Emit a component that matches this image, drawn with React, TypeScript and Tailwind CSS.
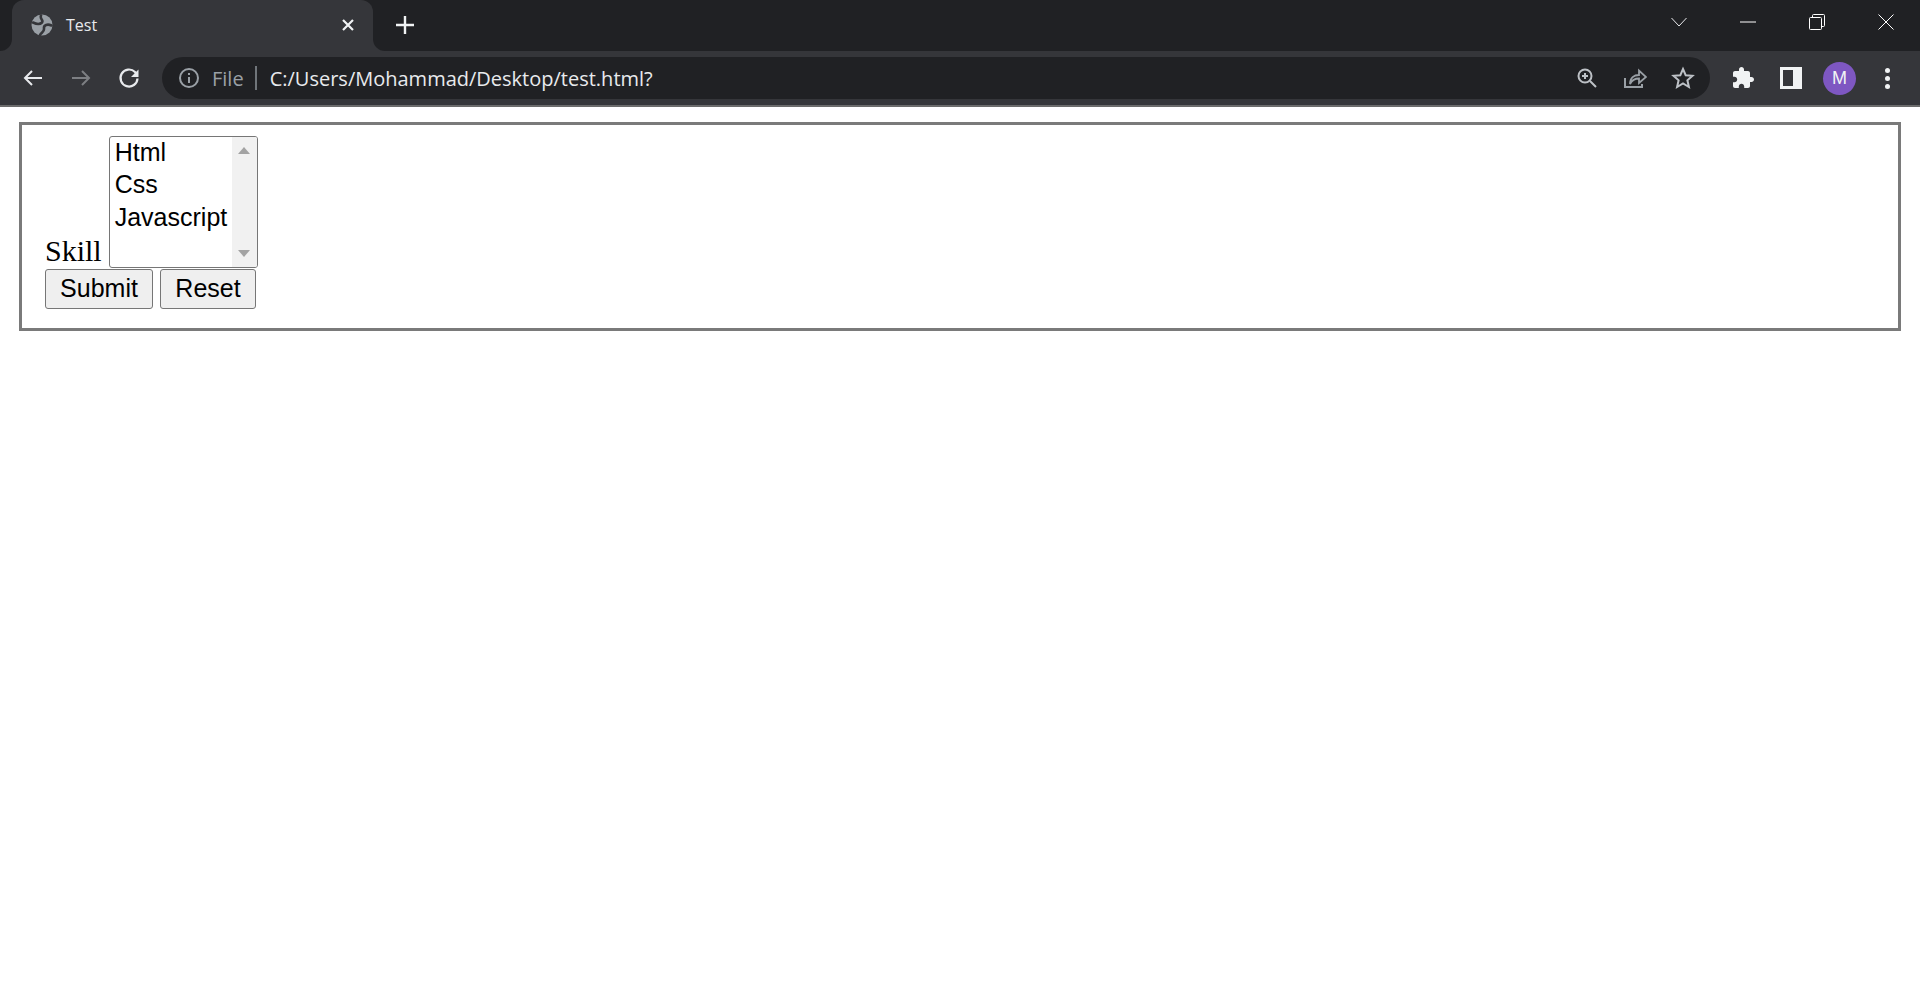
import React from "react";

const TabCorner = ({ side }: { side: "left" | "right" }) => (
  <span
    className={
      side === "left"
        ? "absolute bottom-0 -left-3 h-3 w-3 bg-[#35363a]"
        : "absolute bottom-0 -right-3 h-3 w-3 bg-[#35363a]"
    }
  >
    <span
      className={
        side === "left"
          ? "block h-full w-full rounded-br-xl bg-[#202124]"
          : "block h-full w-full rounded-bl-xl bg-[#202124]"
      }
    />
  </span>
);

const Globe = () => (
  <svg width="22" height="22" viewBox="0 0 22 22" className="shrink-0">
    <circle cx="11" cy="11" r="10.500" fill="#9aa0a6" />
    <g stroke="#35363a" strokeWidth="2.600" fill="none" strokeLinecap="round">
      <path d="M10 1.500C8.500 5 13 6 11 8.500 9 10.500 5 10 2 8.500" />
      <path d="M20.500 11.500C16.500 9.500 12.500 11 13 14.500c.5 3.500-3 4-4 6.500" />
    </g>
  </svg>
);

const Ico = ({ children, w = 24 }: { children: React.ReactNode; w?: number }) => (
  <svg width={w} height={w} viewBox="0 0 24 24" fill="none" className="shrink-0">
    {children}
  </svg>
);

export default function App() {
  return (
    <div className="min-h-screen bg-white font-['Liberation_Sans',sans-serif]">
      <div className="flex h-[51px] items-stretch bg-[#202124]">
        <div className="relative ml-3 flex w-[361px] items-center rounded-t-xl bg-[#35363a] pb-px pl-[19px] pr-[18px]">
          <TabCorner side="left" />
          <Globe />
          <span className="ml-[13px] flex-1 font-['Open_Sans',sans-serif] text-[16px] text-[#e8eaed]">Test</span>
          <svg width="14" height="14" viewBox="0 0 14 14">
            <path d="M2 2l10 10M12 2 2 12" stroke="#f1f3f4" strokeWidth="2.200" />
          </svg>
          <TabCorner side="right" />
        </div>
        <div className="ml-[22px] flex items-center pb-px">
          <svg width="20" height="20" viewBox="0 0 20 20">
            <path d="M10 1v18M1 10h18" stroke="#f1f3f4" strokeWidth="2.400" />
          </svg>
        </div>
        <div className="ml-auto flex items-center pb-2 text-white">
          <svg width="16" height="10" viewBox="0 0 16 10">
            <path d="M.5 1 8 9l7.500-8" stroke="#e8eaed" fill="none" />
          </svg>
          <div className="ml-[53px]">
            <svg width="16" height="2" viewBox="0 0 16 2">
              <path d="M0 1h16" stroke="#fff" />
            </svg>
          </div>
          <div className="ml-[53px]">
            <svg width="16" height="16" viewBox="0 0 16 16" fill="none" stroke="#fff">
              <rect x=".5" y="3.500" width="12" height="12" rx="1" />
              <path d="M3.500 3V1.500a1 1 0 0 1 1-1h10a1 1 0 0 1 1 1v10a1 1 0 0 1-1 1H13" />
            </svg>
          </div>
          <div className="ml-[53px] mr-[26px]">
            <svg width="16" height="16" viewBox="0 0 16 16">
              <path d="M.5.5l15 15M15.500.5l-15 15" stroke="#fff" />
            </svg>
          </div>
        </div>
      </div>

      <div className="flex h-[54px] items-start bg-[#35363a] pt-[6px]">
        <div className="flex h-[42px] w-[162px] shrink-0 items-center pl-[21px]">
          <Ico>
            <path d="M21 12H4M11 5l-7 7 7 7" stroke="#e8eaed" strokeWidth="2" />
          </Ico>
          <div className="ml-6">
            <Ico>
              <path d="M3 12h17M13 5l7 7-7 7" stroke="#7d7f83" strokeWidth="2" />
            </Ico>
          </div>
          <div className="ml-6">
            <Ico>
              <path d="M20.500 12.500A8.500 8.500 0 1 1 18 6l2 2.500" stroke="#e8eaed" strokeWidth="2.200" />
              <path d="M21.500 3.500v7.500H14Z" fill="#e8eaed" />
            </Ico>
          </div>
        </div>
        <div className="flex h-[42px] w-[1548px] shrink-0 items-center rounded-full bg-[#202124] pl-[16px] pr-[15px]">
          <svg width="22" height="22" viewBox="0 0 22 22" fill="none" className="shrink-0">
            <circle cx="11" cy="11" r="9" stroke="#9aa0a6" strokeWidth="2" />
            <path d="M11 10v6M11 6v2" stroke="#9aa0a6" strokeWidth="2" />
          </svg>
          <span className="ml-[12px] pt-px font-['Open_Sans',sans-serif] text-[20px] text-[#9aa0a6]">File</span>
          <span className="ml-[11px] h-6 w-[2px] bg-[#70757a]" />
          <span className="ml-[13px] flex-1 pt-px font-['Open_Sans',sans-serif] text-[20px] text-[#e8eaed]">
            C:/Users/Mohammad/Desktop/test.html?
          </span>
          <Ico>
            <circle cx="10" cy="10" r="6.500" stroke="#bdc1c6" strokeWidth="2" />
            <path d="M15 15l6 6M10 7v6M7 10h6" stroke="#bdc1c6" strokeWidth="2" />
          </Ico>
          <div className="ml-6">
            <Ico>
              <path d="M2 12v9h17v-3" stroke="#9aa0a6" strokeWidth="2" />
              <path
                d="M7 18c0-6 4-9 9-9V4.500l7 6.500-7 6v-4.500c-4 0-7 1.500-9 5.500Z"
                stroke="#9aa0a6"
                strokeWidth="1.800"
              />
            </Ico>
          </div>
          <div className="ml-6">
            <Ico>
              <path
                d="m12 3 2.700 6.200 6.800.6-5.100 4.500 1.500 6.700L12 17.400 6.100 21l1.500-6.700L2.500 9.800l6.800-.6Z"
                stroke="#bdc1c6"
                strokeWidth="2"
              />
            </Ico>
          </div>
        </div>
        <div className="flex h-[42px] flex-1 items-center pl-[21px]">
          <Ico>
            <path
              d="M20.500 11H19V7c0-1.100-.9-2-2-2h-4V3.500C13 2.120 11.880 1 10.500 1S8 2.120 8 3.500V5H4c-1.100 0-1.990.9-1.990 2v3.800H3.500c1.490 0 2.700 1.210 2.700 2.700s-1.210 2.700-2.700 2.700H2V20c0 1.100.9 2 2 2h3.800v-1.500c0-1.490 1.210-2.700 2.700-2.700 1.490 0 2.700 1.210 2.700 2.700V22H17c1.100 0 2-.9 2-2v-4h1.500c1.380 0 2.500-1.120 2.500-2.500S21.880 11 20.500 11z"
              fill="#f1f3f4"
            />
          </Ico>
          <div className="ml-[25px]">
            <svg width="22" height="22" viewBox="0 0 22 22" className="shrink-0">
              <path fillRule="evenodd" d="M0 0h22v22H0ZM3 3v16h10V3Z" fill="#f1f3f4" />
            </svg>
          </div>
          <div className="ml-[21px] flex h-[33px] w-[33px] items-center justify-center rounded-full bg-[#7e57c2] text-[18px] text-[#f1f3f4]">
            M
          </div>
          <div className="ml-[29px] flex flex-col gap-[3px]">
            <span className="h-[5px] w-[5px] rounded-full bg-[#f1f3f4]" />
            <span className="h-[5px] w-[5px] rounded-full bg-[#f1f3f4]" />
            <span className="h-[5px] w-[5px] rounded-full bg-[#f1f3f4]" />
          </div>
        </div>
      </div>
      <div className="h-[2px] bg-[#6b6b6b]" />

      <div className="px-[19px] pt-[15px]">
        <div className="h-[209px] border-[3px] border-[#7a7a7a] pl-[23px] pr-3 pt-[11px]">
          <div className="flex items-end">
            <span className="font-['Liberation_Serif',serif] text-[30px] leading-[34px] text-black">Skill</span>
            <div className="ml-[7px] flex h-[132px] w-[149px] rounded-[3px] border border-[#767676]">
              <div className="-mt-px flex-1 pl-[5px] text-[25px] leading-[32px] text-black">
                <div>Html</div>
                <div>Css</div>
                <div className="pt-px">Javascript</div>
              </div>
              <div className="flex w-[25px] flex-col items-center justify-between rounded-r-[2px] bg-[#f1f1f1] pb-[10px] pt-[10px]">
                <span className="h-0 w-0 border-x-[6px] border-b-[7px] border-x-transparent border-b-[#a3a3a3]" />
                <span className="h-0 w-0 border-x-[6px] border-t-[7px] border-x-transparent border-t-[#a3a3a3]" />
              </div>
            </div>
          </div>
          <div className="mt-px flex gap-[7px]">
            <button className="h-10 w-[108px] rounded-[3px] border border-[#767676] bg-[#efefef] text-[25px] text-black">
              Submit
            </button>
            <button className="h-10 w-[96px] rounded-[3px] border border-[#767676] bg-[#efefef] text-[25px] text-black">
              Reset
            </button>
          </div>
        </div>
      </div>
    </div>
  );
}
